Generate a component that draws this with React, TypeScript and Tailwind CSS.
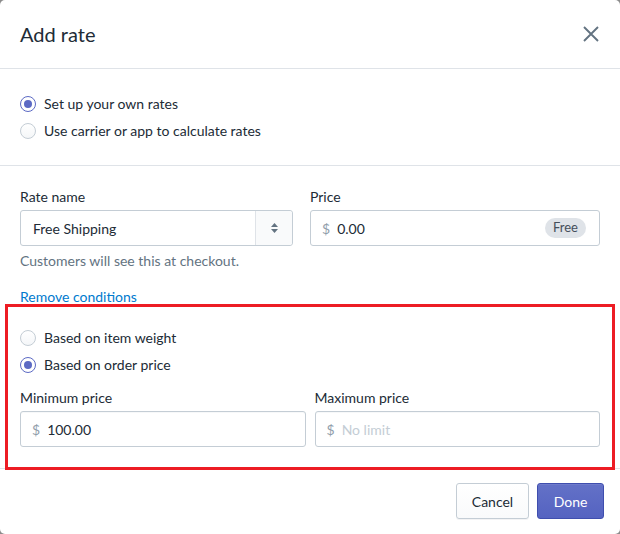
import React, { useState } from 'react'

const font = { fontFamily: 'Lato, "Noto Sans", sans-serif' }

interface RadioProps {
    label: string;
    checked: boolean;
    onSelect: () => void;
}

function Radio({ label, checked, onSelect }: RadioProps) {
    return (
        <label className="flex h-[27px] cursor-pointer items-center gap-[8px]" onClick={onSelect}>
            <span
                className={
                    checked
                        ? 'flex h-4 w-4 items-center justify-center rounded-full border-[1.5px] border-[#5c6ac4] bg-white'
                        : 'flex h-4 w-4 items-center justify-center rounded-full border border-[#c4cdd5] bg-gradient-to-b from-white to-[#f4f6f8]'
                }
            >
                {checked && <span className="h-[8px] w-[8px] rounded-full bg-[#5c6ac4]" />}
            </span>
            <span className="text-[14px] text-[#212b36]">{label}</span>
        </label>
    )
}

function PriceInput({ value, placeholder }: { value?: string; placeholder?: string }) {
    return (
        <div className="flex h-9 items-center rounded-[3px] border border-[#c4cdd5] bg-white pl-[11px] pr-3 shadow-[inset_0_1px_0_0_rgba(99,115,129,0.05)]">
            <span className="text-[14px] text-[#919eab]">$</span>
            {value ? (
                <span className="ml-[7px] text-[14px] text-[#212b36]">{value}</span>
            ) : (
                <span className="ml-[7px] text-[14px] text-[#c4cdd5]">{placeholder}</span>
            )}
        </div>
    )
}

export default function App() {
    const [rateType, setRateType] = useState('own')
    const [condition, setCondition] = useState('price')

    return (
        <div className="h-[534px] w-[620px] bg-[#8c8c8c]" style={font}>
            <div className="relative flex h-full flex-col rounded-[5px] bg-white">
                <div className="flex h-[69px] items-center justify-between border-b border-[#dfe3e8] pl-5 pr-[21px]">
                    <h2 className="text-[20px] text-[#212b36]">Add rate</h2>
                    <svg width="16" height="16" viewBox="0 0 16 16" className="text-[#637381]">
                        <path d="M1 1L15 15M15 1L1 15" stroke="currentColor" strokeWidth="1.9" />
                    </svg>
                </div>

                <div className="border-b border-[#dfe3e8] px-5 pb-[21px] pt-[21px]">
                    <Radio label="Set up your own rates" checked={rateType === 'own'} onSelect={() => setRateType('own')} />
                    <Radio label="Use carrier or app to calculate rates" checked={rateType === 'carrier'} onSelect={() => setRateType('carrier')} />
                </div>

                <div className="border-b border-[#dfe3e8] px-5 pb-[21px] pt-[21px]">
                    <div className="flex gap-[17px]">
                        <div className="w-[273px]">
                            <div className="mb-[3px] text-[14px] leading-5 text-[#212b36]">Rate name</div>
                            <div className="flex h-9 rounded-[3px] border border-[#c4cdd5] bg-white">
                                <div className="flex flex-1 items-center pl-3 text-[14px] text-[#212b36]">Free Shipping</div>
                                <div className="flex w-[37px] flex-col items-center justify-center gap-[2px] rounded-r-[3px] border-l border-[#dfe3e8] bg-[#f9fafb]">
                                    <svg width="7" height="4" viewBox="0 0 7 4"><path d="M3.5 0L7 4H0z" fill="#637381" /></svg>
                                    <svg width="7" height="4" viewBox="0 0 7 4"><path d="M0 0h7L3.5 4z" fill="#637381" /></svg>
                                </div>
                            </div>
                            <div className="mt-[5px] text-[14px] leading-5 text-[#637381]">Customers will see this at checkout.</div>
                        </div>
                        <div className="flex-1">
                            <div className="mb-[3px] text-[14px] leading-5 text-[#212b36]">Price</div>
                            <div className="flex h-9 items-center rounded-[3px] border border-[#c4cdd5] bg-white pl-[11px] pr-[13px]">
                                <span className="text-[14px] text-[#919eab]">$</span>
                                <span className="ml-[7px] flex-1 text-[14px] text-[#212b36]">0.00</span>
                                <span className="flex h-5 items-center rounded-full bg-[#dfe3e8] px-[8px] text-[13px] text-[#454f5b]">Free</span>
                            </div>
                        </div>
                    </div>

                    <div className="mt-4 text-[14px] leading-5 text-[#007ace]">Remove conditions</div>

                    <div className="mt-[17px]">
                        <Radio label="Based on item weight" checked={condition === 'weight'} onSelect={() => setCondition('weight')} />
                        <Radio label="Based on order price" checked={condition === 'price'} onSelect={() => setCondition('price')} />
                    </div>

                    <div className="mt-[10px] flex gap-[9px]">
                        <div className="flex-1">
                            <div className="mb-[3px] text-[14px] leading-5 text-[#212b36]">Minimum price</div>
                            <PriceInput value="100.00" />
                        </div>
                        <div className="flex-1">
                            <div className="mb-[3px] text-[14px] leading-5 text-[#212b36]">Maximum price</div>
                            <PriceInput placeholder="No limit" />
                        </div>
                    </div>
                </div>

                <div className="flex justify-end gap-2 px-4 pt-[14px]">
                    <button className="h-9 w-[73px] rounded-[3px] border border-[#c4cdd5] bg-gradient-to-b from-white to-[#f9fafb] text-[14px] text-[#212b36] shadow-[0_1px_0_0_rgba(22,29,37,0.05)]">
                        Cancel
                    </button>
                    <button className="h-9 w-[67px] rounded-[3px] border border-[#3f4eae] bg-gradient-to-b from-[#6371c7] to-[#5563c1] text-[14px] text-white shadow-[inset_0_1px_0_0_#6f7bcb]">
                        Done
                    </button>
                </div>

                <div className="pointer-events-none absolute left-[5px] top-[304px] h-[166px] w-[610px] border-[3px] border-[#ed1c24]" />
            </div>
        </div>
    )
}
